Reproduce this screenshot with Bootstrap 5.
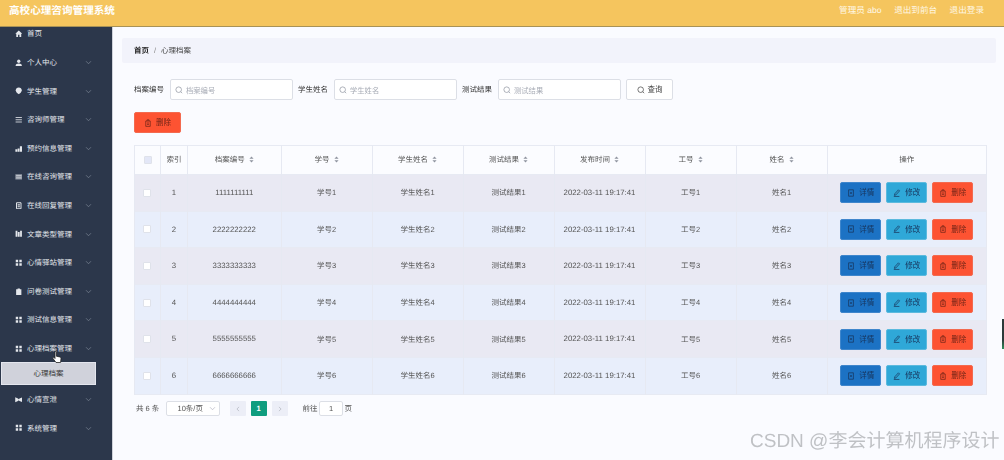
<!DOCTYPE html>
<html lang="zh-CN">
<head>
<meta charset="utf-8">
<title>高校心理咨询管理系统</title>
<link href="https://cdn.jsdelivr.net/npm/bootstrap@5.3.0/dist/css/bootstrap.min.css" rel="stylesheet">
<style>
html,body{width:1004px;height:460px;overflow:hidden;margin:0}
body{background:#fafbff;font-family:"Liberation Sans","Noto Sans CJK SC",sans-serif;font-size:7.5px;color:#555;position:relative;text-rendering:geometricPrecision}
.ico{width:8px;height:8px;fill:none;stroke:currentColor;stroke-width:.9;flex:none}
.page-frame{height:460px;filter:blur(.4px)}
.top-bar{height:27px;background:#f5c55e;border-bottom:1px solid #a89257;padding:0 9px;position:relative;z-index:2;align-items:center}
.top-title{font-size:10.6px;font-weight:700;color:#fff;line-height:1;margin-top:-3px}
.top-links{gap:12.5px;color:#fff8e6;font-size:8.6px;margin-right:11px;margin-top:-5px}
.body-row{height:433px}
.side-col{width:113px;flex:none;background:#2c374b;border-right:1px solid #cfd2da;overflow:hidden}
.side-list{margin-top:-7.3px}
.side-item{height:28.6px;padding-left:14.500px;padding-right:20px;color:#e4e7ec;font-size:7.5px;gap:5px}
.side-item .ico{width:7.500px;height:7.500px}
.side-item .chev{width:7px;height:7px;margin-left:auto;color:#7d8797;stroke-width:1}
.side-sub{height:23px;margin:-.5px 16px 0 1px;background:#d0d2db;border:1px solid #e4e6ee;color:#333;font-size:7.5px}
.main-col{padding:11px 8px 0 9px;min-width:0}
.crumbs{height:25px;background:#f2f3fb;margin:0;padding:0 12px;font-size:7.5px;--bs-breadcrumb-divider-color:#888;--bs-breadcrumb-item-padding-x:5px;border-radius:2px}
.crumbs .breadcrumb-item{line-height:25px;color:#444}
.crumbs .breadcrumb-item.active{color:#444}
.crumbs b{color:#222}
.work{padding-left:12px;padding-right:10px}
.filter-row{margin-top:16px;height:21px}
.f-label{width:35.500px;color:#333;font-size:7.5px;padding-top:1px}
.f-input{width:123px;height:21px;background:#fff;border:1px solid #dcdfe6;border-radius:2px;padding:0 4.500px;gap:3px;color:#8f95a0;margin-right:5.5px}
.f-input input{border:0;outline:0;background:transparent;padding:2px 0 0;width:90px;height:19px;font-size:7.3px;line-height:17px;color:#555}
.f-input input::placeholder{color:#a8acb6}
.f-btn{width:47px;height:21px;padding:0;font-size:7.5px;color:#444;background:#fff;border:1px solid #dcdfe6;border-radius:2px;gap:3px}
.del-wrap{margin-top:12px}
.act-btn{height:21px;padding:0;font-size:7.5px;border:1px solid transparent;border-radius:2px;gap:4px;width:41px;color:#17335a}
.act-del{background:#fd5332;color:#6f2417;border-color:#f36a4f}
.act-del:hover{background:#fd5332}
.act-view{background:#1c72c4;border-color:#3f86cc}
.act-edit{background:#2fa8d8;border-color:#5cbade}
.big-del{width:47px}
.act-set{gap:5px}
.data-wrap{margin-top:12px;width:852px}
.data-tbl{table-layout:fixed;width:852px;margin:0;--bs-table-bg:transparent;border-color:#e7eaf3;font-size:7.5px;color:#555}
.data-tbl th,.data-tbl td{padding:0;text-align:center;vertical-align:middle;font-weight:400;color:#555;border-color:#e6e9f2}
.data-tbl thead tr{height:29px;background:#fbfcff}
.data-tbl thead th{color:#555}
.data-tbl tbody tr{height:36.6px}
.data-tbl tbody tr:nth-child(odd){background:#e9e9f3}
.data-tbl tbody tr:nth-child(even){background:#e8eefb}
.data-tbl td{font-size:7.8px}
.data-tbl td.zh{font-size:7.5px}
.c-a{width:26px}.c-b{width:27px}.c-c{width:93.5px}.c-d{width:91px}.c-e{width:159.5px}
.tick{width:8px;height:8px;background:#fff;border:1px solid #dfe2ea;border-radius:1px;display:inline-block;vertical-align:middle}
.tick-b{margin-right:2px}
.tick-h{background:#e3e7f7}
.sort{width:5px;height:7px;margin-left:4px;vertical-align:-.5px;color:#8f949f}
.pager-row{margin-top:6.500px;height:15px;padding-left:2px;color:#555;font-size:7.5px}
.pager-total{width:22px;white-space:nowrap}
.size-sel{width:54px;height:15px;margin-left:7.5px;background:#fff;border:1px solid #dcdfe6;border-radius:2px;padding:0 3px 0 11px;color:#555}
.size-sel .ico{width:7px;height:7px;margin-left:auto;color:#aab}
.pg-list{margin:0 0 0 10px;gap:6px}
.pg-list .page-link{width:16px;height:15px;padding:0;font-size:7.5px;line-height:15px;text-align:center;background:#eceef7;border:0;color:#a0a4ae;border-radius:1px!important;display:flex;align-items:center;justify-content:center}
.pg-list .page-link .ico{width:6px;height:6px}
.pg-list .active .page-link{background:#0f9d7f;color:#fff;font-weight:700}
.goto{margin-left:15px;gap:1.500px}
.goto-box{width:24px;height:15px;border:1px solid #dcdfe6;background:#fff;border-radius:2px;text-align:center;font-size:7.5px;padding:0;color:#555}
.water{position:absolute;left:750px;top:430px;font-size:19px;line-height:24px;color:#b9bbbf;white-space:nowrap;opacity:.9;z-index:3}
.hand{position:absolute;left:52px;top:351px;width:10px;height:13px;z-index:3}
.edge-mark{position:absolute;left:1002px;top:319px;width:2px;height:30px;background:linear-gradient(#2d3a3a 70%,#2f8f5a);z-index:3}
</style>
</head>
<body>
<svg width="0" height="0" class="position-absolute">
<defs>
<symbol id="i-chev" viewBox="0 0 10 10"><path d="M1.5 3.2 5 6.8l3.5-3.6"/></symbol>
<symbol id="i-left" viewBox="0 0 10 10"><path d="M6.800 1.500 3.200 5l3.600 3.500"/></symbol>
<symbol id="i-right" viewBox="0 0 10 10"><path d="M3.200 1.500 6.800 5 3.200 8.500"/></symbol>
<symbol id="i-home" viewBox="0 0 10 10"><path fill="currentColor" stroke="none" d="M5 .8 .4 5h1.3v4.2h2.4V6.4h1.8v2.8h2.4V5h1.3z"/></symbol>
<symbol id="i-user" viewBox="0 0 10 10"><circle cx="5" cy="3" r="2.2" fill="currentColor" stroke="none"/><path fill="currentColor" stroke="none" d="M.8 9.4c0-2.4 1.8-3.4 4.2-3.4s4.2 1 4.2 3.4z"/></symbol>
<symbol id="i-shield" viewBox="0 0 10 10"><path fill="currentColor" stroke="none" d="M5 .5C7.4.5 9 2.2 9 4.2 9 6.6 6.6 8.600 5 9.500 3.400 8.600 1 6.600 1 4.200 1 2.200 2.600.5 5 .5z"/></symbol>
<symbol id="i-lines" viewBox="0 0 10 10"><path stroke-width="1.100" d="M.8 2h8.400M.8 5h8.400M.8 8h8.400"/></symbol>
<symbol id="i-chart" viewBox="0 0 10 10"><path fill="currentColor" stroke="none" d="M.5 5.500h2.500v3.500H.5zM3.500 4.500h2.500v4.500H3.500zM6.500 1.500h3v7.500h-3z"/></symbol>
<symbol id="i-box" viewBox="0 0 10 10"><path fill="currentColor" stroke="none" d="M.5 1.500h9v7h-9z" opacity=".55"/><path stroke-width=".8" d="M1.500 3.500h7M1.500 6.500h7"/></symbol>
<symbol id="i-doc" viewBox="0 0 10 10"><path stroke-width="1.300" d="M2 1h6v8H2z"/><path fill="currentColor" stroke="none" d="M3.500 3h3v1.500h-3zM3.500 5.500h3V7h-3z"/></symbol>
<symbol id="i-bars" viewBox="0 0 10 10"><path fill="currentColor" stroke="none" d="M.8 1h2.400v8H.8zM3.800 2.500h2.400V9H3.800zM6.800 1h2.400v8H6.800z"/></symbol>
<symbol id="i-grid" viewBox="0 0 10 10"><path fill="currentColor" stroke="none" d="M1 1h3.200v3.200H1zM5.800 1H9v3.200H5.800zM1 5.800h3.200V9H1zM5.800 5.800H9V9H5.800z"/></symbol>
<symbol id="i-clip" viewBox="0 0 10 10"><path fill="currentColor" stroke="none" d="M3.500.6h3v1.200h2V9.400h-7V1.800h2z"/></symbol>
<symbol id="i-film" viewBox="0 0 10 10"><path fill="currentColor" stroke="none" d="M.3 1.800 4 3.200 5 4.200 6 3.200 9.700 1.800V8.200L6 6.800 5 5.800 4 6.800.3 8.200z"/></symbol>
<symbol id="i-search" viewBox="0 0 10 10"><circle cx="4.600" cy="4.600" r="3.500"/><path d="m7.200 7.200 1.800 1.800"/></symbol>
<symbol id="i-del" viewBox="0 0 10 10"><path d="M2.200 2.500h5.600V9.200H2.200zM3.800 2.500V1h2.400v1.500M3.800 5h2.400M3.800 6.800h2.400"/></symbol>
<symbol id="i-view" viewBox="0 0 10 10"><path d="M2 1h6v8H2zM3.800 5h2.400M5 3.800v2.400"/></symbol>
<symbol id="i-edit" viewBox="0 0 10 10"><path d="M6.800 1 8.200 2.400 3.600 7.400 1.800 8 2.200 6zM1 9.300h7"/></symbol>
<symbol id="i-sort" viewBox="0 0 6 8"><path stroke="none" fill="currentColor" d="M3 .5 5.500 3.200H.5zM3 7.500.5 4.800h5z"/></symbol>
</defs>
</svg>

<div class="page-frame">
  <nav class="navbar top-bar d-flex justify-content-between flex-nowrap">
    <span class="top-title">高校心理咨询管理系统</span>
    <div class="top-links d-flex">
      <span>管理员 abo</span><span>退出到前台</span><span>退出登录</span>
    </div>
  </nav>
  <div class="body-row d-flex">
    <aside class="side-col">
      <div class="side-list nav flex-column flex-nowrap">
        <div class="side-item d-flex align-items-center"><svg class="ico"><use href="#i-home"/></svg>首页</div>
        <div class="side-item d-flex align-items-center"><svg class="ico"><use href="#i-user"/></svg>个人中心<svg class="ico chev"><use href="#i-chev"/></svg></div>
        <div class="side-item d-flex align-items-center"><svg class="ico"><use href="#i-shield"/></svg>学生管理<svg class="ico chev"><use href="#i-chev"/></svg></div>
        <div class="side-item d-flex align-items-center"><svg class="ico"><use href="#i-lines"/></svg>咨询师管理<svg class="ico chev"><use href="#i-chev"/></svg></div>
        <div class="side-item d-flex align-items-center"><svg class="ico"><use href="#i-chart"/></svg>预约信息管理<svg class="ico chev"><use href="#i-chev"/></svg></div>
        <div class="side-item d-flex align-items-center"><svg class="ico"><use href="#i-box"/></svg>在线咨询管理<svg class="ico chev"><use href="#i-chev"/></svg></div>
        <div class="side-item d-flex align-items-center"><svg class="ico"><use href="#i-doc"/></svg>在线回复管理<svg class="ico chev"><use href="#i-chev"/></svg></div>
        <div class="side-item d-flex align-items-center"><svg class="ico"><use href="#i-bars"/></svg>文章类型管理<svg class="ico chev"><use href="#i-chev"/></svg></div>
        <div class="side-item d-flex align-items-center"><svg class="ico"><use href="#i-grid"/></svg>心情驿站管理<svg class="ico chev"><use href="#i-chev"/></svg></div>
        <div class="side-item d-flex align-items-center"><svg class="ico"><use href="#i-clip"/></svg>问卷测试管理<svg class="ico chev"><use href="#i-chev"/></svg></div>
        <div class="side-item d-flex align-items-center"><svg class="ico"><use href="#i-grid"/></svg>测试信息管理<svg class="ico chev"><use href="#i-chev"/></svg></div>
        <div class="side-item d-flex align-items-center"><svg class="ico"><use href="#i-grid"/></svg>心理档案管理<svg class="ico chev"><use href="#i-chev"/></svg></div>
        <div class="side-sub d-flex align-items-center justify-content-center">心理档案</div>
        <div class="side-item d-flex align-items-center"><svg class="ico"><use href="#i-film"/></svg>心情宣泄<svg class="ico chev"><use href="#i-chev"/></svg></div>
        <div class="side-item d-flex align-items-center"><svg class="ico"><use href="#i-grid"/></svg>系统管理<svg class="ico chev"><use href="#i-chev"/></svg></div>
      </div>
    </aside>
    <main class="main-col flex-grow-1">
      <ol class="breadcrumb crumbs">
        <li class="breadcrumb-item"><b>首页</b></li>
        <li class="breadcrumb-item active">心理档案</li>
      </ol>
      <div class="work">
        <div class="filter-row d-flex align-items-center">
          <span class="f-label">档案编号</span>
          <label class="f-input d-flex align-items-center"><svg class="ico"><use href="#i-search"/></svg><input placeholder="档案编号"></label>
          <span class="f-label">学生姓名</span>
          <label class="f-input d-flex align-items-center"><svg class="ico"><use href="#i-search"/></svg><input placeholder="学生姓名"></label>
          <span class="f-label">测试结果</span>
          <label class="f-input d-flex align-items-center"><svg class="ico"><use href="#i-search"/></svg><input placeholder="测试结果"></label>
          <button class="btn f-btn d-inline-flex align-items-center justify-content-center"><svg class="ico"><use href="#i-search"/></svg>查询</button>
        </div>
        <div class="del-wrap">
          <button class="btn act-btn act-del big-del d-inline-flex align-items-center justify-content-center"><svg class="ico"><use href="#i-del"/></svg>删除</button>
        </div>
        <div class="data-wrap">
          <table class="table table-bordered data-tbl">
            <colgroup><col class="c-a"><col class="c-b"><col class="c-c"><col class="c-d"><col class="c-d"><col class="c-d"><col class="c-d"><col class="c-d"><col class="c-d"><col class="c-e"></colgroup>
            <thead>
              <tr>
                <th><span class="tick tick-h"></span></th>
                <th>索引</th>
                <th>档案编号<svg class="sort"><use href="#i-sort"/></svg></th>
                <th>学号<svg class="sort"><use href="#i-sort"/></svg></th>
                <th>学生姓名<svg class="sort"><use href="#i-sort"/></svg></th>
                <th>测试结果<svg class="sort"><use href="#i-sort"/></svg></th>
                <th>发布时间<svg class="sort"><use href="#i-sort"/></svg></th>
                <th>工号<svg class="sort"><use href="#i-sort"/></svg></th>
                <th>姓名<svg class="sort"><use href="#i-sort"/></svg></th>
                <th>操作</th>
              </tr>
            </thead>
            <tbody>
              <tr><td><span class="tick tick-b"></span></td><td>1</td><td>1111111111</td><td class="zh">学号1</td><td class="zh">学生姓名1</td><td class="zh">测试结果1</td><td>2022-03-11 19:17:41</td><td class="zh">工号1</td><td class="zh">姓名1</td>
                <td><div class="d-flex justify-content-center act-set"><button class="btn act-btn act-view d-inline-flex align-items-center justify-content-center"><svg class="ico"><use href="#i-view"/></svg>详情</button><button class="btn act-btn act-edit d-inline-flex align-items-center justify-content-center"><svg class="ico"><use href="#i-edit"/></svg>修改</button><button class="btn act-btn act-del d-inline-flex align-items-center justify-content-center"><svg class="ico"><use href="#i-del"/></svg>删除</button></div></td></tr>
              <tr><td><span class="tick tick-b"></span></td><td>2</td><td>2222222222</td><td class="zh">学号2</td><td class="zh">学生姓名2</td><td class="zh">测试结果2</td><td>2022-03-11 19:17:41</td><td class="zh">工号2</td><td class="zh">姓名2</td>
                <td><div class="d-flex justify-content-center act-set"><button class="btn act-btn act-view d-inline-flex align-items-center justify-content-center"><svg class="ico"><use href="#i-view"/></svg>详情</button><button class="btn act-btn act-edit d-inline-flex align-items-center justify-content-center"><svg class="ico"><use href="#i-edit"/></svg>修改</button><button class="btn act-btn act-del d-inline-flex align-items-center justify-content-center"><svg class="ico"><use href="#i-del"/></svg>删除</button></div></td></tr>
              <tr><td><span class="tick tick-b"></span></td><td>3</td><td>3333333333</td><td class="zh">学号3</td><td class="zh">学生姓名3</td><td class="zh">测试结果3</td><td>2022-03-11 19:17:41</td><td class="zh">工号3</td><td class="zh">姓名3</td>
                <td><div class="d-flex justify-content-center act-set"><button class="btn act-btn act-view d-inline-flex align-items-center justify-content-center"><svg class="ico"><use href="#i-view"/></svg>详情</button><button class="btn act-btn act-edit d-inline-flex align-items-center justify-content-center"><svg class="ico"><use href="#i-edit"/></svg>修改</button><button class="btn act-btn act-del d-inline-flex align-items-center justify-content-center"><svg class="ico"><use href="#i-del"/></svg>删除</button></div></td></tr>
              <tr><td><span class="tick tick-b"></span></td><td>4</td><td>4444444444</td><td class="zh">学号4</td><td class="zh">学生姓名4</td><td class="zh">测试结果4</td><td>2022-03-11 19:17:41</td><td class="zh">工号4</td><td class="zh">姓名4</td>
                <td><div class="d-flex justify-content-center act-set"><button class="btn act-btn act-view d-inline-flex align-items-center justify-content-center"><svg class="ico"><use href="#i-view"/></svg>详情</button><button class="btn act-btn act-edit d-inline-flex align-items-center justify-content-center"><svg class="ico"><use href="#i-edit"/></svg>修改</button><button class="btn act-btn act-del d-inline-flex align-items-center justify-content-center"><svg class="ico"><use href="#i-del"/></svg>删除</button></div></td></tr>
              <tr><td><span class="tick tick-b"></span></td><td>5</td><td>5555555555</td><td class="zh">学号5</td><td class="zh">学生姓名5</td><td class="zh">测试结果5</td><td>2022-03-11 19:17:41</td><td class="zh">工号5</td><td class="zh">姓名5</td>
                <td><div class="d-flex justify-content-center act-set"><button class="btn act-btn act-view d-inline-flex align-items-center justify-content-center"><svg class="ico"><use href="#i-view"/></svg>详情</button><button class="btn act-btn act-edit d-inline-flex align-items-center justify-content-center"><svg class="ico"><use href="#i-edit"/></svg>修改</button><button class="btn act-btn act-del d-inline-flex align-items-center justify-content-center"><svg class="ico"><use href="#i-del"/></svg>删除</button></div></td></tr>
              <tr><td><span class="tick tick-b"></span></td><td>6</td><td>6666666666</td><td class="zh">学号6</td><td class="zh">学生姓名6</td><td class="zh">测试结果6</td><td>2022-03-11 19:17:41</td><td class="zh">工号6</td><td class="zh">姓名6</td>
                <td><div class="d-flex justify-content-center act-set"><button class="btn act-btn act-view d-inline-flex align-items-center justify-content-center"><svg class="ico"><use href="#i-view"/></svg>详情</button><button class="btn act-btn act-edit d-inline-flex align-items-center justify-content-center"><svg class="ico"><use href="#i-edit"/></svg>修改</button><button class="btn act-btn act-del d-inline-flex align-items-center justify-content-center"><svg class="ico"><use href="#i-del"/></svg>删除</button></div></td></tr>
            </tbody>
          </table>
        </div>
        <div class="pager-row d-flex align-items-center">
          <span class="pager-total">共 6 条</span>
          <div class="size-sel d-flex align-items-center">10条/页<svg class="ico"><use href="#i-chev"/></svg></div>
          <ul class="pagination pg-list">
            <li class="page-item"><span class="page-link"><svg class="ico"><use href="#i-left"/></svg></span></li>
            <li class="page-item active"><span class="page-link">1</span></li>
            <li class="page-item"><span class="page-link"><svg class="ico"><use href="#i-right"/></svg></span></li>
          </ul>
          <div class="goto d-flex align-items-center"><span>前往</span><input class="goto-box" value="1"><span>页</span></div>
        </div>
      </div>
    </main>
  </div>
</div>
<svg class="hand" viewBox="0 0 10 13"><path fill="#fff" stroke="#222" stroke-width=".8" d="M3 1.200c0-.8 1.400-.8 1.400 0v4l3.200.7c1 .2 1.500.8 1.400 1.800l-.4 3.800H4l-3-4c-.5-.8.300-1.500 1-1l1 1z"/></svg>
<div class="edge-mark"></div>
<div class="water">CSDN @李会计算机程序设计</div>
</body>
</html>
